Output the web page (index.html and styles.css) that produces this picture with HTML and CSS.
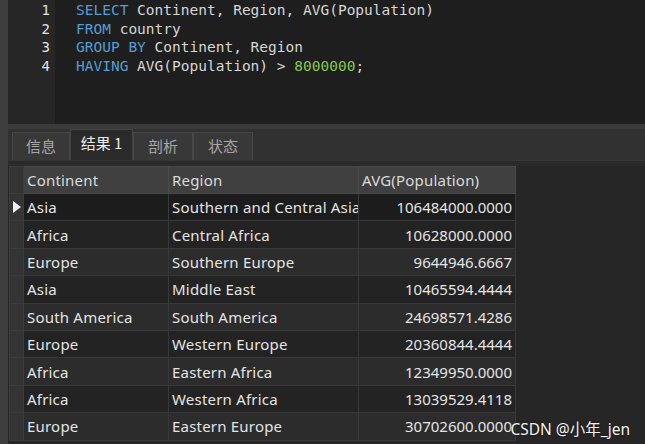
FILE: index.html
```html
<!DOCTYPE html>
<html>
<head>
<meta charset="utf-8">
<link rel="stylesheet" href="styles.css">
</head>
<body>
<div class="app">
  <div class="leftbar"></div>
  <div class="main">
    <div class="editor">
      <div class="gutter">
        <div class="ln">1</div>
        <div class="ln">2</div>
        <div class="ln">3</div>
        <div class="ln">4</div>
      </div>
      <div class="code">
        <div class="cl"><span class="kw">SELECT</span> Continent, Region, AVG(Population)</div>
        <div class="cl"><span class="kw">FROM</span> country</div>
        <div class="cl"><span class="kw">GROUP BY</span> Continent, Region</div>
        <div class="cl"><span class="kw">HAVING</span> AVG(Population) &gt; <span class="num">8000000</span>;</div>
      </div>
    </div>
    <div class="sep"></div>
    <div class="tabbar">
      <div class="tab">信息</div>
      <div class="tab active">结果 1</div>
      <div class="tab">剖析</div>
      <div class="tab">状态</div>
    </div>
    <div class="subsep"></div>
    <div class="panel">
      <table class="grid">
        <colgroup>
          <col class="c-ind"><col class="c-cont"><col class="c-reg"><col class="c-avg">
        </colgroup>
        <thead>
          <tr><th class="ind"></th><th>Continent</th><th>Region</th><th>AVG(Population)</th></tr>
        </thead>
        <tbody>
          <tr class="sel"><td class="ind"><span class="tri"></span></td><td>Asia</td><td class="clip">Southern and Central Asia</td><td class="n">106484000.0000</td></tr>
          <tr class="even"><td class="ind"></td><td>Africa</td><td>Central Africa</td><td class="n">10628000.0000</td></tr>
          <tr class="odd"><td class="ind"></td><td>Europe</td><td>Southern Europe</td><td class="n">9644946.6667</td></tr>
          <tr class="even"><td class="ind"></td><td>Asia</td><td>Middle East</td><td class="n">10465594.4444</td></tr>
          <tr class="odd"><td class="ind"></td><td>South America</td><td>South America</td><td class="n">24698571.4286</td></tr>
          <tr class="even"><td class="ind"></td><td>Europe</td><td>Western Europe</td><td class="n">20360844.4444</td></tr>
          <tr class="odd"><td class="ind"></td><td>Africa</td><td>Eastern Africa</td><td class="n">12349950.0000</td></tr>
          <tr class="even"><td class="ind"></td><td>Africa</td><td>Western Africa</td><td class="n">13039529.4118</td></tr>
          <tr class="odd"><td class="ind"></td><td>Europe</td><td>Eastern Europe</td><td class="n">30702600.0000</td></tr>
        </tbody>
      </table>
      <div class="watermark">CSDN @小年_jen</div>
    </div>
  </div>
</div>
</body>
</html>
```
FILE: styles.css
```css
html, body {
  margin: 0;
  padding: 0;
  background: #262626;
  overflow: hidden;
}
.app {
  display: flex;
  width: 645px;
  height: 444px;
}
.leftbar {
  width: 8px;
  background: #3e3e3e;
  flex: none;
}
.main {
  flex: 1;
  display: flex;
  flex-direction: column;
  min-width: 0;
}
.editor {
  height: 124px;
  display: flex;
  flex: none;
}
.gutter {
  width: 42px;
  padding-right: 5px;
  background: #262626;
  padding-top: 1px;
  font-family: "DejaVu Sans Mono", monospace;
  font-size: 14px;
  line-height: 18.7px;
  color: #e2e2e2;
  text-align: right;
}
.code {
  flex: 1;
  background: #1e1e1e;
  padding-left: 21px;
  padding-top: 1px;
  font-family: "DejaVu Sans Mono", monospace;
  font-size: 14.5px;
  line-height: 18.7px;
  color: #d6d6d6;
}
.cl { white-space: pre; }
.kw { color: #569cd6; }
.num { color: #86c84e; }
.sep {
  height: 5px;
  background: #3b3b3b;
  flex: none;
}
.tabbar {
  height: 31px;
  background: #313131;
  display: flex;
  align-items: flex-end;
  padding-left: 4px;
  flex: none;
}
.tab {
  box-sizing: border-box;
  height: 28px;
  width: 60px;
  background: #383838;
  border: 1px solid #474747;
  border-bottom: none;
  color: #a6a6a6;
  font-family: "Noto Sans CJK SC", "Noto Sans", sans-serif;
  font-size: 15px;
  display: flex;
  align-items: center;
  justify-content: center;
  padding-bottom: 2px;
}
.tab:first-child { width: 58px; }
.tab.active {
  width: 63px;
  height: 31px;
  background: #2a2a2a;
  border-color: #434343;
  color: #ececec;
  padding-bottom: 5px;
}
.subsep {
  height: 5px;
  background: #2a2a2a;
  border-top: 1px solid #363636;
  flex: none;
}
.panel {
  flex: 1;
  position: relative;
  background: #262626;
  padding-left: 1px;
}
.grid {
  border-collapse: collapse;
  table-layout: fixed;
  width: 506px;
  font-family: "Noto Sans", "Noto Sans CJK SC", sans-serif;
  font-size: 15px;
  letter-spacing: 0.2px;
  color: #e4e4e4;
}
.c-ind { width: 14px; }
.c-cont { width: 145px; }
.c-reg { width: 190px; }
.c-avg { width: 157px; }
.grid th, .grid td {
  border: 1px solid #383838;
  padding: 0 3px;
  white-space: nowrap;
  overflow: hidden;
  text-align: left;
  font-weight: normal;
}
.grid th {
  height: 26px;
  background: #404040;
  border-color: #4a4a4a;
  color: #dadada;
}
.grid td {
  height: 26.4px;
}
.grid td.clip { text-overflow: clip; }
.grid td.n {
  text-align: right;
  letter-spacing: 0;
}
.grid .ind {
  background: #343434;
  padding: 0;
  border-color: #3c3c3c;
}
tr.sel td { background: #1c1c1c; }
tr.even td { background: #232323; }
tr.odd td { background: #2c2c2c; }
tr td.ind { background: #343434; }
.tri {
  display: block;
  width: 0;
  height: 0;
  margin-left: 3px;
  border-top: 6px solid transparent;
  border-bottom: 6px solid transparent;
  border-left: 8px solid #f0f0f0;
}
.watermark {
  position: absolute;
  right: 15px;
  bottom: 4px;
  font-family: "Noto Sans", "Noto Sans CJK SC", sans-serif;
  font-size: 15.5px;
  color: #f2f2f2;
  text-shadow: 0 0 2px rgba(0,0,0,0.6);
}
```
